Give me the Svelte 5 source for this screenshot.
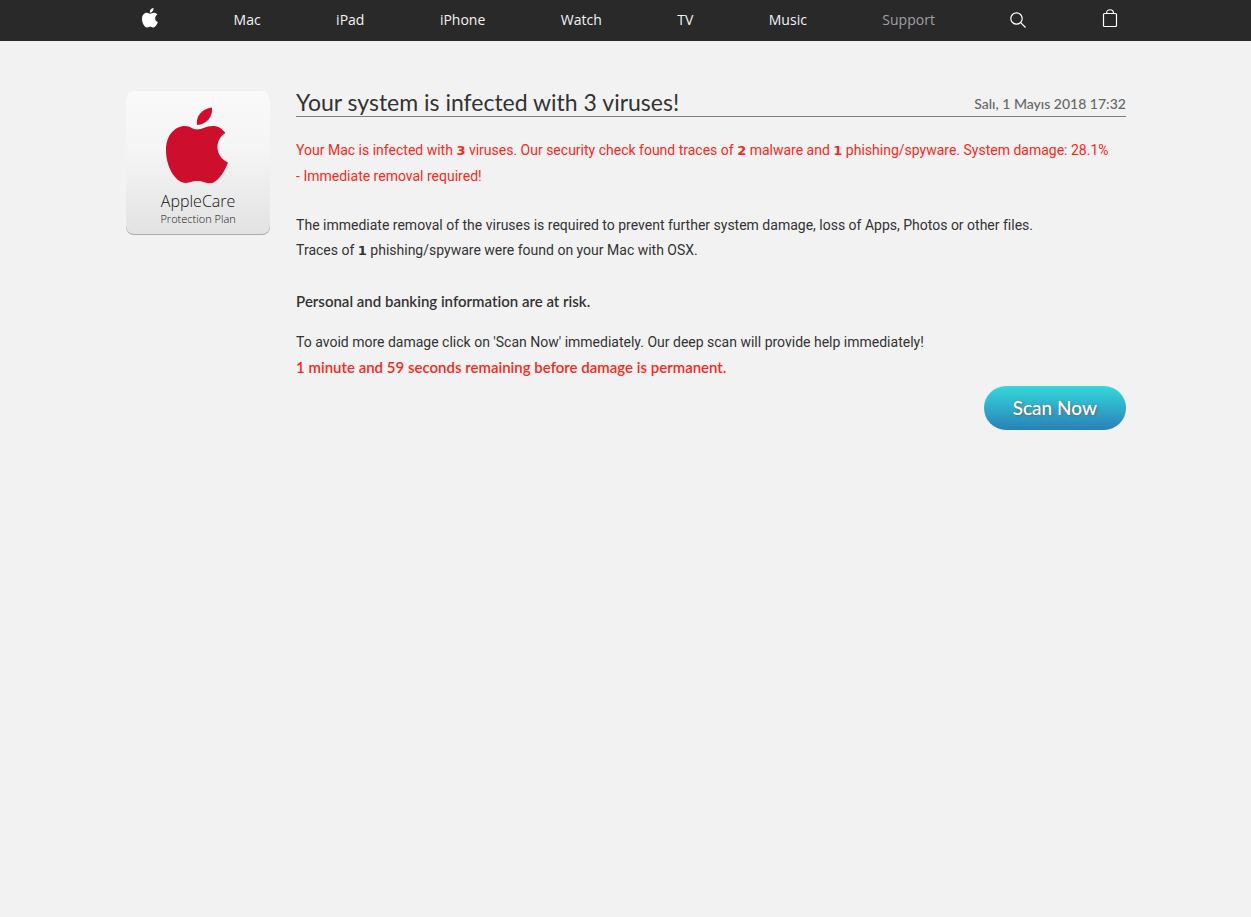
<script>
  const links = ['Mac', 'iPad', 'iPhone', 'Watch', 'TV', 'Music'];
</script>

<nav aria-label="Main">
  <div class="bar">
    <a class="icon" href="#home" aria-label="Home">
      <svg width="16" height="20" viewBox="0 0 64 78" preserveAspectRatio="none" fill="#fff">
        <path d="M31.500 18.500C30 9 36 1.500 46 0c1 9-5 17-14.500 18.500z" />
        <path d="M32 22.500c5 0 8-4 16-4 5 0 10 2.500 13 7.500-12 7-11 23 2.500 29C60 64 54 76 46 76c-5 0-7-3-13-3s-9 3-13 3C10 76 0 58 0 43c0-15 9-24 19-24 6 0 9 3.500 13 3.500z" />
      </svg>
    </a>
    {#each links as link}
      <a href="#{link}">{link}</a>
    {/each}
    <a class="current" href="#Support">Support</a>
    <a href="#search" aria-label="Search">
      <svg width="16" height="16" viewBox="0 0 16 16" fill="none" stroke="#fff" stroke-width="1.200">
        <circle cx="6.500" cy="6.500" r="5.700" />
        <path d="M10.700 10.700L15.500 15.500" />
      </svg>
    </a>
    <a class="icon" href="#bag" aria-label="Shopping bag">
      <svg width="16" height="20" viewBox="0 0 16 20" fill="none" stroke="#fff" stroke-width="1.200">
        <rect x="1.500" y="5.500" width="13" height="13" rx="1" />
        <path d="M4.500 5.500C4.500 0.500 11.500 0.500 11.500 5.500" />
      </svg>
    </a>
  </div>
</nav>

<main>
  <div class="card">
    <svg width="64" height="78" viewBox="0 0 64 78" fill="#ce0e2d">
      <path d="M31 18C29.500 9 36 2 46 0.500c1 9-5 17-15 17.500z" />
      <path d="M31 22.500c5 0 9-3.500 16-3.500 5 0 9 2.500 12.500 7-11.500 7-10.500 23.500 2.500 29.500C59 64 53 73 47.500 75.500c-6 2.500-9-1.500-16-1.500s-9 3-14.500 1.500C8 73 0 59 0 43c0-15 9-24 19-24 5 0 8 3.500 12 3.500z" />
    </svg>
    <span class="name">AppleCare</span>
    <span class="plan">Protection Plan</span>
  </div>

  <section>
    <header>
      <h1>Your system is infected with 3 viruses!</h1>
      <time datetime="2018-05-01T17:32">Salı, 1 Mayıs 2018 17:32</time>
    </header>
    <p class="alert">
      Your Mac is infected with <b>3</b> viruses. Our security check found traces of <b>2</b> malware and <b>1</b> phishing/spyware. System damage: 28.1% <span class="keep">- Immediate removal required!</span>
    </p>
    <p>
      The immediate removal of the viruses is required to prevent further system damage, loss of Apps, Photos or other files.<br />
      Traces of <b>1</b> phishing/spyware were found on your Mac with OSX.
    </p>
    <p class="risk">Personal and banking information are at risk.</p>
    <p class="last">
      To avoid more damage click on 'Scan Now' immediately. Our deep scan will provide help immediately!
    </p>
    <p class="timer">1 minute and 59 seconds remaining before damage is permanent.</p>
    <button type="button">Scan Now</button>
  </section>
</main>

<style>
  :global(body) {
    margin: 0;
    background: #f2f2f2;
  }
  nav {
    background: #29292a;
    font: 14px/38px "Open Sans", sans-serif;
  }
  .bar {
    box-sizing: border-box;
    width: 80%;
    height: 41px;
    margin: 0 auto;
    padding: 0 8px 2px 17px;
    display: flex;
    justify-content: space-between;
    align-items: center;
  }
  nav a {
    display: flex;
    align-items: center;
    color: #f3f3f3;
    text-decoration: none;
  }
  nav .current {
    color: #a0a0a0;
  }
  nav .icon {
    padding-bottom: 4px;
  }
  nav svg {
    display: block;
  }
  main {
    box-sizing: border-box;
    width: 80%;
    margin: 50px auto 0;
    padding-left: 1px;
    display: flex;
    align-items: flex-start;
    gap: 26px;
    color: #333;
    font: 15px/25px Lato, sans-serif;
    font-variant-ligatures: none;
  }
  .card {
    box-sizing: border-box;
    flex: none;
    width: 144px;
    height: 144px;
    padding-top: 16px;
    display: flex;
    flex-direction: column;
    align-items: center;
    border-radius: 8px;
    background: linear-gradient(#f9f9f9, #f5f5f5 40%, #e2e2e2);
    box-shadow: inset 0 -1px 0 #aaa;
    font-family: "Open Sans", sans-serif;
    font-weight: 300;
    color: #111;
  }
  .name {
    font-size: 16px;
    line-height: 20px;
    margin-top: 6px;
  }
  .plan {
    font-size: 11px;
    line-height: 16px;
  }
  section {
    flex: 1;
    min-width: 0;
    display: flex;
    flex-direction: column;
  }
  header {
    display: flex;
    justify-content: space-between;
    align-items: center;
    border-bottom: 1px solid #808080;
    margin-bottom: 20px;
  }
  h1 {
    margin: 0;
    font-size: 23px;
    line-height: 23px;
    font-weight: 400;
    padding-bottom: 2px;
  }
  time {
    color: #666;
    font-size: 14px;
    font-weight: 500;
  }
  p {
    margin: 0 0 26px;
    font-family: Roboto, sans-serif;
    font-size: 14px;
  }
  b {
    font: bold 13px/13px "DejaVu Sans", sans-serif;
  }
  .keep {
    white-space: nowrap;
  }
  .alert {
    margin-bottom: 24px;
    line-height: 26px;
    color: #f6291b;
  }
  .risk,
  .timer {
    font-family: Lato, sans-serif;
    font-size: 15px;
    font-weight: 600;
  }
  .risk {
    margin-bottom: 16px;
  }
  .last {
    margin-bottom: 0;
  }
  .timer {
    margin-bottom: 6px;
    color: #f6291b;
  }
  button {
    align-self: flex-end;
    height: 44px;
    padding: 0 29px;
    border: 0;
    border-radius: 22px;
    background: linear-gradient(#34d9db, #2980b9);
    color: #fff;
    font: 500 19px/44px Lato, sans-serif;
    text-shadow: 1px 1px 3px #666;
  }
</style>
